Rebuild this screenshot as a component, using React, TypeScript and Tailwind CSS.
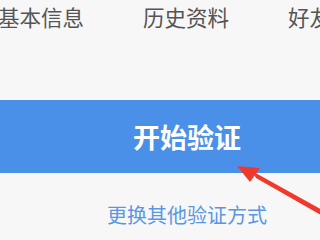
export default function App() {
  return (
    <div
      className="relative w-[320px] h-[240px] overflow-hidden bg-[#f7f7f7]"
      style={{ fontFamily: '"Noto Sans CJK SC", "Noto Sans", sans-serif' }}
    >
      <div className="flex gap-[59px] ml-[-2px] pt-[2px] h-[100px] text-[21.5px] leading-[30px] text-[#555555] whitespace-nowrap">
        <span>基本信息</span>
        <span>历史资料</span>
        <span>好友资料</span>
      </div>
      <div className="flex h-[73px] items-center justify-center pl-[54px] bg-[#4a90e8]">
        <span className="text-[27px] font-bold text-white leading-none">开始验证</span>
      </div>
      <div className="flex justify-center pl-[54px] pt-[28px]">
        <span className="text-[20px] leading-[28px] text-[#5a97e2]">更换其他验证方式</span>
      </div>

      <svg className="absolute left-0 top-0" width="320" height="240" viewBox="0 0 320 240">
        <polygon points="237,166 260,168 250,182" fill="#f0392b" />
        <polygon points="252,171 256,178 326,218 326,212" fill="#f0392b" />
      </svg>
    </div>
  );
}
